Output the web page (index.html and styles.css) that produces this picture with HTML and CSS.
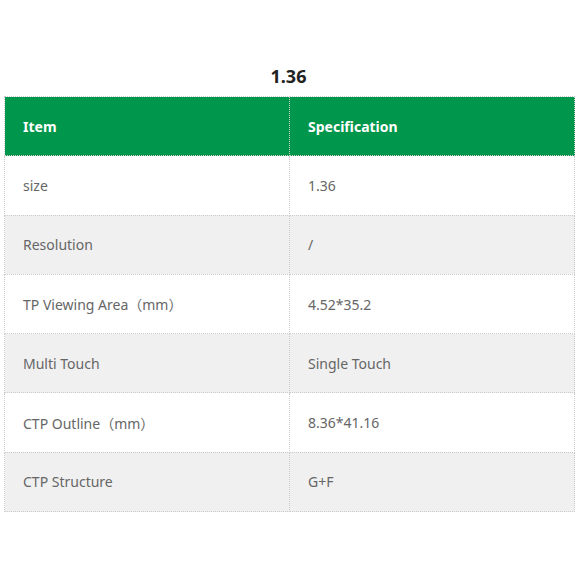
FILE: index.html
```html
<!DOCTYPE html>
<html>
<head>
<meta charset="utf-8">
<link rel="stylesheet" href="styles.css">
</head>
<body>
<div class="page">
  <h2 class="title">1.36</h2>
  <table class="spec">
    <thead>
      <tr><th>Item</th><th>Specification</th></tr>
    </thead>
    <tbody>
      <tr><td>size</td><td>1.36</td></tr>
      <tr><td>Resolution</td><td>/</td></tr>
      <tr><td>TP Viewing Area（mm）</td><td>4.52*35.2</td></tr>
      <tr><td>Multi Touch</td><td>Single Touch</td></tr>
      <tr><td>CTP Outline（mm）</td><td>8.36*41.16</td></tr>
      <tr><td>CTP Structure</td><td>G+F</td></tr>
    </tbody>
  </table>
</div>
</body>
</html>
```
FILE: styles.css
```css
html, body {
  margin: 0;
  padding: 0;
  background: #fff;
}
.page {
  padding: 64px 4px 0 4px;
  font-family: "Noto Sans", "Open Sans", "Liberation Sans", "Noto Sans CJK SC", sans-serif;
}
.title {
  margin: 0 0 8px 0;
  text-align: center;
  font-size: 18px;
  line-height: 24px;
  font-weight: 700;
  color: #222;
}
.spec {
  width: 571px;
  border-collapse: collapse;
  table-layout: fixed;
}
.spec th, .spec td {
  border: 1px dotted #cccccc;
  height: 58.3px;
  padding: 0 18px;
  text-align: left;
  font-size: 14px;
  vertical-align: middle;
}
.spec th:first-child, .spec td:first-child {
  width: 248px;
}
.spec th {
  background: #00964b;
  color: #fff;
  font-weight: 700;
}
.spec td {
  color: #666;
}
.spec tbody tr:nth-child(even) td {
  background: #f0f0f0;
}
```
